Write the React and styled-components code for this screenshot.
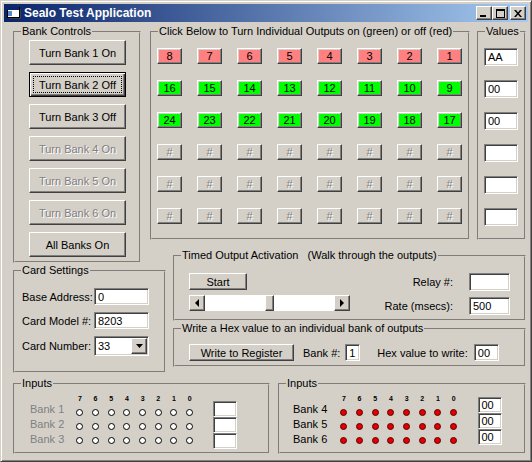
import React from "react";
import styled, { createGlobalStyle, css } from "styled-components";

const FACE = "#d4d0c8";
const SHADOW = "#808080";
const DARK = "#404040";
const LIGHT = "#ffffff";

const GlobalStyle = createGlobalStyle`
  * { box-sizing: border-box; }
  html, body { margin: 0; padding: 0; background: #3a6ea5; }
  body {
    font-family: "Liberation Sans", Arial, sans-serif;
    font-size: 11px;
    color: #000;
  }
`;

const raised = css`
  border: 1px solid;
  border-color: ${LIGHT} ${DARK} ${DARK} ${LIGHT};
  box-shadow: inset -1px -1px 0 ${SHADOW}, inset 1px 1px 0 ${FACE};
`;

const sunken = css`
  border: 1px solid;
  border-color: ${SHADOW} ${LIGHT} ${LIGHT} ${SHADOW};
  box-shadow: inset 1px 1px 0 ${DARK}, inset -1px -1px 0 ${FACE};
`;

/* Window chrome */
const Window = styled.div`
  width: 532px;
  height: 462px;
  display: flex;
  flex-direction: column;
  background: ${FACE};
  border: 1px solid;
  border-color: ${FACE} ${DARK} ${DARK} ${FACE};
  box-shadow: inset 1px 1px 0 ${LIGHT}, inset -1px -1px 0 ${SHADOW};
  padding: 3px;
`;

const TitleBar = styled.div`
  flex: none;
  height: 18px;
  display: flex;
  align-items: center;
  padding: 0 2px;
  background: linear-gradient(to right, #0a246a, #a6caf0);
  color: #fff;
  font-weight: bold;
  font-size: 12px;
`;

const TitleText = styled.span`
  flex: 1;
  margin-left: 2px;
  white-space: nowrap;
`;

const CaptionButton = styled.div`
  ${raised};
  width: 16px;
  height: 14px;
  background: ${FACE};
  display: flex;
  align-items: center;
  justify-content: center;
  margin-left: ${(p) => p.$gap || 0}px;
`;

const Client = styled.div`
  flex: 1;
  display: flex;
  flex-direction: column;
  padding: 3px 2px 0 9px;
`;

const MainGrid = styled.div`
  display: grid;
  grid-template-columns: 128px 9px 16px 7px 1fr;
  grid-template-rows: 215px 9px 14px 1px 57px 1px 45px 6px;
  grid-template-areas:
    "bank . top top top"
    "bank . . . ."
    "bank . . . timed"
    ". . . . timed"
    "card card card . timed"
    "card card card . ."
    "card card card . hex"
    "card card card . .";
`;

const TopRow = styled.div`
  grid-area: top;
  display: flex;
  gap: 7px;
`;

const BottomRow = styled.div`
  display: flex;
  gap: 8px;
  height: 77px;
  margin-top: 4px;
`;

/* Group boxes */
const Group = styled.fieldset`
  margin: 0;
  padding: 0;
  min-width: 0;
  border: 2px groove ${FACE};
  ${(p) => p.$area && `grid-area: ${p.$area};`}
  ${(p) => (p.$w ? `width: ${p.$w}px; flex: none;` : "flex: 1;")}
`;

const Legend = styled.legend`
  margin-left: 6px;
  padding: 0 1px;
  line-height: 13px;
  white-space: pre;
`;

/* Controls */
const Btn = styled.button`
  width: ${(p) => p.$w}px;
  height: ${(p) => p.$h}px;
  margin: 0;
  padding: 0;
  font: inherit;
  color: #000;
  background: ${(p) => p.$bg || FACE};
  display: flex;
  align-items: center;
  justify-content: center;
  white-space: nowrap;
  ${(p) =>
    p.$focused
      ? css`
          border: 1px solid #000;
          box-shadow: inset 1px 1px 0 ${LIGHT}, inset -1px -1px 0 ${DARK},
            inset -2px -2px 0 ${SHADOW}, inset 2px 2px 0 ${FACE};
        `
      : raised}

  &:disabled {
    color: ${SHADOW};
    text-shadow: 1px 1px 0 ${LIGHT};
  }
`;

const FocusRect = styled.span`
  flex: 1;
  align-self: stretch;
  margin: 3px;
  border: 1px dotted #000;
  display: flex;
  align-items: center;
  justify-content: center;
`;

const Field = styled.div`
  ${sunken};
  width: ${(p) => p.$w}px;
  height: ${(p) => p.$h}px;
  background: #fff;
  display: flex;
  align-items: center;
  padding: 0 3px;
  white-space: nowrap;
`;

const Label = styled.span`
  white-space: nowrap;
  align-self: center;
  ${(p) => p.$right && "justify-self: end;"}
`;

/* Bank controls */
const BankBody = styled.div`
  display: flex;
  flex-direction: column;
  gap: 7px;
  padding: 2px 0 0 14px;
`;

/* Outputs */
const OutGrid = styled.div`
  display: grid;
  grid-template-columns: repeat(8, 25px);
  grid-auto-rows: 16px;
  column-gap: 15px;
  row-gap: 16px;
  padding: 10px 0 0 5px;
`;

const ValueCol = styled.div`
  display: flex;
  flex-direction: column;
  gap: 14px;
  padding: 10px 0 0 5px;
`;

/* Card settings */
const CardGrid = styled.div`
  display: grid;
  grid-template-columns: 72px 55px;
  grid-template-rows: 17px 17px 20px;
  row-gap: 7px;
  padding: 11px 0 0 7px;
`;

const Combo = styled.div`
  ${sunken};
  background: #fff;
  display: flex;
  padding: 1px;
`;

const ComboText = styled.span`
  flex: 1;
  display: flex;
  align-items: center;
  padding-left: 2px;
`;

const ArrowBox = styled.div`
  ${raised};
  width: ${(p) => p.$w || 16}px;
  height: ${(p) => p.$h || 16}px;
  background: ${FACE};
  display: flex;
  align-items: center;
  justify-content: center;
  flex: none;
`;

/* Timed output */
const TimedBody = styled.div`
  display: flex;
  justify-content: space-between;
  padding: 11px 14px 0 14px;
`;

const StackCol = styled.div`
  display: flex;
  flex-direction: column;
  gap: 5px;
`;

const PairGrid = styled.div`
  display: grid;
  grid-template-columns: auto 41px;
  grid-auto-rows: 18px;
  column-gap: 16px;
  row-gap: 6px;
`;

const Scroll = styled.div`
  display: flex;
  width: 161px;
  height: 16px;
`;

const Track = styled.div`
  flex: 1;
  display: flex;
  background: #fff;
`;

const TrackPart = styled.div`
  flex-basis: 0;
`;

const Thumb = styled.div`
  ${raised};
  width: 9px;
  flex: none;
  background: ${FACE};
`;

/* Hex write */
const HexBody = styled.div`
  display: flex;
  align-items: center;
  padding: 9px 0 0 14px;
`;

const Spaced = styled.span`
  margin-left: ${(p) => p.$ml || 0}px;
  margin-right: ${(p) => p.$mr || 0}px;
  white-space: nowrap;
`;

/* Inputs */
const InBody = styled.div`
  display: flex;
  align-items: flex-start;
  padding-left: ${(p) => p.$pad}px;
`;

const BankNames = styled.div`
  width: ${(p) => p.$w}px;
  margin-top: 12px;
  display: flex;
  flex-direction: column;
  line-height: 15px;
  color: ${(p) => (p.$dim ? SHADOW : "#000")};
`;

const DotGrid = styled.div`
  display: grid;
  grid-template-columns: repeat(8, 15.7px);
  grid-template-rows: repeat(4, 14px);
  margin-top: 1px;
`;

const Digit = styled.span`
  font-size: 7px;
  font-weight: bold;
  justify-self: center;
  align-self: center;
`;

const Dot = styled.span`
  width: 7px;
  height: 7px;
  border-radius: 50%;
  border: 1px solid ${(p) => (p.$on ? "#600000" : "#000")};
  background: ${(p) => (p.$on ? "#e00000" : "#fff")};
  justify-self: center;
  align-self: center;
`;

const BoxStack = styled.div`
  display: flex;
  flex-direction: column;
  margin-left: ${(p) => p.$ml}px;
  margin-top: ${(p) => p.$mt}px;
`;

/* Icons */
const AppIcon = () => (
  <svg width="16" height="16" viewBox="0 0 16 16" shapeRendering="crispEdges">
    <rect x="1" y="2" width="12" height="10" fill="#fff" stroke="#000" />
    <rect x="1" y="2" width="12" height="3" fill="#0a246a" />
    <rect x="2" y="6" width="4" height="5" fill="#5a8cc8" />
    <rect x="14" y="4" width="1" height="9" fill="#404040" />
    <rect x="3" y="13" width="12" height="1" fill="#404040" />
  </svg>
);

const MinGlyph = () => (
  <svg width="8" height="7" viewBox="0 0 8 7" shapeRendering="crispEdges">
    <rect x="0" y="5" width="6" height="2" fill="#000" />
  </svg>
);

const MaxGlyph = () => (
  <svg width="9" height="9" viewBox="0 0 9 9" shapeRendering="crispEdges">
    <rect x="0.5" y="0.5" width="8" height="8" fill="none" stroke="#000" />
    <rect x="0" y="0" width="9" height="2" fill="#000" />
  </svg>
);

const CloseGlyph = () => (
  <svg width="8" height="7" viewBox="0 0 8 7">
    <path d="M0 0h2l2 2.4 2-2.4h2l-3 3.5 3 3.5h-2l-2-2.4-2 2.4h-2l3-3.5z" fill="#000" />
  </svg>
);

const Tri = ({ dir }) => {
  const pts = {
    left: "4,0 4,8 0,4",
    right: "0,0 0,8 4,4",
    down: "0,0 7,0 3.5,4",
  }[dir];
  const vb = dir === "down" ? "0 0 7 4" : "0 0 4 8";
  const [w, h] = dir === "down" ? [7, 4] : [4, 8];
  return (
    <svg width={w} height={h} viewBox={vb}>
      <polygon points={pts} fill="#000" />
    </svg>
  );
};

/* Data */
const bankButtons = [
  { label: "Turn Bank 1 On" },
  { label: "Turn Bank 2 Off", focused: true },
  { label: "Turn Bank 3 Off" },
  { label: "Turn Bank 4 On", disabled: true },
  { label: "Turn Bank 5 On", disabled: true },
  { label: "Turn Bank 6 On", disabled: true },
  { label: "All Banks On" },
];

const outputRows = [
  { bg: "#ff8080", nums: [8, 7, 6, 5, 4, 3, 2, 1] },
  { bg: "#00ff00", nums: [16, 15, 14, 13, 12, 11, 10, 9] },
  { bg: "#00ff00", nums: [24, 23, 22, 21, 20, 19, 18, 17] },
  { off: true },
  { off: true },
  { off: true },
];

const values = ["AA", "00", "00", "", "", ""];
const bits = [7, 6, 5, 4, 3, 2, 1, 0];
const sliderPos = 0.5;

function InputsPanel({ width, banks, live, pad, labelW, boxMl, boxMt }) {
  return (
    <Group $w={width}>
      <Legend>Inputs</Legend>
      <InBody $pad={pad}>
        <BankNames $w={labelW} $dim={!live}>
          {banks.map((b) => (
            <span key={b.name}>{b.name}</span>
          ))}
        </BankNames>
        <DotGrid>
          {bits.map((b) => (
            <Digit key={"d" + b}>{b}</Digit>
          ))}
          {banks.map((bank) =>
            bits.map((b) => <Dot key={bank.name + b} $on={live} />)
          )}
        </DotGrid>
        <BoxStack $ml={boxMl} $mt={boxMt}>
          {banks.map((b) => (
            <Field key={b.name} $w={24} $h={16}>
              {b.value}
            </Field>
          ))}
        </BoxStack>
      </InBody>
    </Group>
  );
}

export default function App() {
  return (
    <>
      <GlobalStyle />
      <Window>
        <TitleBar>
          <AppIcon />
          <TitleText>SeaIo Test Application</TitleText>
          <CaptionButton>
            <MinGlyph />
          </CaptionButton>
          <CaptionButton>
            <MaxGlyph />
          </CaptionButton>
          <CaptionButton $gap={2}>
            <CloseGlyph />
          </CaptionButton>
        </TitleBar>

        <Client>
          <MainGrid>
            <Group $area="bank">
              <Legend>Bank Controls</Legend>
              <BankBody>
                {bankButtons.map((b) => (
                  <Btn key={b.label} $w={97} $h={25} $focused={b.focused} disabled={b.disabled}>
                    {b.focused ? <FocusRect>{b.label}</FocusRect> : b.label}
                  </Btn>
                ))}
              </BankBody>
            </Group>

            <TopRow>
              <Group $w={320}>
                <Legend>Click Below to Turn Individual Outputs on (green) or off (red)</Legend>
                <OutGrid>
                  {outputRows.map((row, r) =>
                    row.off
                      ? bits.map((b) => (
                          <Btn key={r + "-" + b} $w={25} $h={16} disabled>
                            #
                          </Btn>
                        ))
                      : row.nums.map((n) => (
                          <Btn key={n} $w={25} $h={16} $bg={row.bg}>
                            {n}
                          </Btn>
                        ))
                  )}
                </OutGrid>
              </Group>
              <Group>
                <Legend>Values</Legend>
                <ValueCol>
                  {values.map((v, i) => (
                    <Field key={i} $w={34} $h={18}>
                      {v}
                    </Field>
                  ))}
                </ValueCol>
              </Group>
            </TopRow>

            <Group $area="card">
              <Legend>Card Settings</Legend>
              <CardGrid>
                <Label>Base Address:</Label>
                <Field $w={55} $h={17}>0</Field>
                <Label>Card Model #:</Label>
                <Field $w={55} $h={17}>8203</Field>
                <Label>Card Number:</Label>
                <Combo>
                  <ComboText>33</ComboText>
                  <ArrowBox $w={16} $h={16}>
                    <Tri dir="down" />
                  </ArrowBox>
                </Combo>
              </CardGrid>
            </Group>

            <Group $area="timed">
              <Legend>{"Timed Output Activation   (Walk through the outputs)"}</Legend>
              <TimedBody>
                <StackCol>
                  <Btn $w={58} $h={17}>Start</Btn>
                  <Scroll>
                    <ArrowBox>
                      <Tri dir="left" />
                    </ArrowBox>
                    <Track>
                      <TrackPart style={{ flexGrow: sliderPos }} />
                      <Thumb />
                      <TrackPart style={{ flexGrow: 1 - sliderPos }} />
                    </Track>
                    <ArrowBox>
                      <Tri dir="right" />
                    </ArrowBox>
                  </Scroll>
                </StackCol>
                <PairGrid>
                  <Label $right>Relay #:</Label>
                  <Field $w={41} $h={18} />
                  <Label $right>Rate (msecs):</Label>
                  <Field $w={41} $h={18}>500</Field>
                </PairGrid>
              </TimedBody>
            </Group>

            <Group $area="hex">
              <Legend>Write a Hex value to an individual bank of outputs</Legend>
              <HexBody>
                <Btn $w={105} $h={17}>Write to Register</Btn>
                <Spaced $ml={9} $mr={5}>Bank #:</Spaced>
                <Field $w={15} $h={17}>1</Field>
                <Spaced $ml={17} $mr={6}>Hex value to write:</Spaced>
                <Field $w={25} $h={17}>00</Field>
              </HexBody>
            </Group>
          </MainGrid>

          <BottomRow>
            <InputsPanel
              width={257}
              live={false}
              pad={15}
              labelW={42}
              boxMl={15}
              boxMt={11}
              banks={[
                { name: "Bank 1", value: "" },
                { name: "Bank 2", value: "" },
                { name: "Bank 3", value: "" },
              ]}
            />
            <InputsPanel
              live
              pad={13}
              labelW={43}
              boxMl={16}
              boxMt={7}
              banks={[
                { name: "Bank 4", value: "00" },
                { name: "Bank 5", value: "00" },
                { name: "Bank 6", value: "00" },
              ]}
            />
          </BottomRow>
        </Client>
      </Window>
    </>
  );
}
